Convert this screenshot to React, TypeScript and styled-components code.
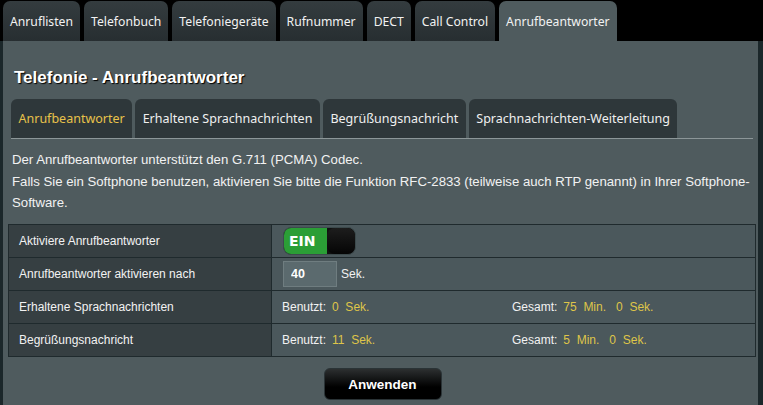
import styled, { createGlobalStyle } from "styled-components";

const GlobalStyle = createGlobalStyle`
  html, body {
    margin: 0;
    padding: 0;
    background: #000;
    width: 763px;
    height: 405px;
    overflow: hidden;
  }
`;

const Page = styled.div`
  width: 763px;
  height: 405px;
  display: flex;
  flex-direction: column;
  background: #000;
  font-family: "Liberation Sans", Arial, sans-serif;
`;

const TopTabs = styled.div`
  display: flex;
  gap: 4px;
  padding: 1px 0 0 3px;
  height: 40px;
`;

const TopTab = styled.div<{ $active?: boolean }>`
  display: flex;
  align-items: center;
  padding: 0 7px;
  border-radius: 7px 7px 0 0;
  font-family: "Noto Sans", sans-serif;
  font-size: 12.2px;
  color: #f2f2f2;
  background: ${(p) =>
    p.$active ? "#4f5b5e" : "linear-gradient(#343c3f, #272e31)"};
`;

const Body = styled.div`
  flex: 1;
  display: flex;
  background: #1b272a;
  padding-left: 3px;
`;

const Panel = styled.div`
  flex: 1;
  margin-right: 5px;
  background: #4f5b5e;
  padding-top: 26px;
  display: flex;
  flex-direction: column;
`;

const Title = styled.h2`
  margin: 0 0 0 11px;
  font-size: 17px;
  font-weight: bold;
  color: #fff;
  text-shadow: 1px 1px 1px #000;
  height: 22px;
  line-height: 22px;
`;

const SubTabs = styled.div`
  display: flex;
  gap: 3px;
  margin: 10px 5px 0 8px;
  border-bottom: 1px solid #8c9698;
  height: 39px;
`;

const SubTab = styled.div<{ $active?: boolean }>`
  display: flex;
  align-items: center;
  padding: 0 7.5px;
  border-radius: 6px 6px 0 0;
  background: #2e373a;
  font-family: "Noto Sans", sans-serif;
  font-size: 12.5px;
  color: ${(p) => (p.$active ? "#e8c24a" : "#f0f0f0")};
`;

const Intro = styled.div`
  padding: 10px 4px 0 9px;
  font-size: 13.2px;
  line-height: 21.5px;
  color: #f2f2f2;
  height: 75px;
`;

const Table = styled.div`
  margin: 0 2px 0 5px;
  display: grid;
  grid-template-columns: 263px 1fr;
  border: 1px solid #1f2a2d;
`;

const LabelCell = styled.div`
  background: #363f42;
  border-right: 1px solid #1f2a2d;
  border-bottom: 1px solid #1f2a2d;
  height: 32px;
  display: flex;
  align-items: center;
  padding-left: 10px;
  font-size: 12px;
  color: #f2f2f2;
  &:nth-last-child(2) {
    border-bottom: none;
  }
`;

const ValueCell = styled.div`
  background: #4b585c;
  border-bottom: 1px solid #1f2a2d;
  height: 32px;
  display: flex;
  align-items: center;
  padding-left: 10px;
  font-size: 12px;
  color: #f2f2f2;
  &:last-child {
    border-bottom: none;
  }
`;

const Toggle = styled.div`
  width: 73px;
  height: 28px;
  border-radius: 8px;
  background: #111;
  border: 1px solid #3c4a4c;
  display: flex;
  overflow: hidden;
  box-sizing: border-box;
  margin-left: 1px;
`;

const ToggleOn = styled.div`
  width: 38px;
  background: #2b9e36;
  color: #fff;
  font-family: "DejaVu Sans", sans-serif;
  font-weight: bold;
  font-size: 14px;
  display: flex;
  align-items: center;
  padding-left: 5px;
`;

const ToggleKnob = styled.div`
  flex: 1;
  background: linear-gradient(#1d1d1d, #050505);
  border-radius: 8px;
`;

const NumberInput = styled.input`
  width: 54px;
  height: 26px;
  box-sizing: border-box;
  background: #5b6a6e;
  border: 1px solid #6f7d80;
  color: #fff;
  font-family: "Liberation Sans", Arial, sans-serif;
  font-weight: bold;
  font-size: 12.5px;
  padding: 0 0 0 7px;
  margin: 0 4px 0 1px;
  outline: none;
`;

const Stat = styled.div`
  display: flex;
  gap: 4px;
  width: 230px;
`;

const Yellow = styled.span`
  color: #dfc549;
  margin-left: 2px;
`;

const Footer = styled.div`
  display: flex;
  justify-content: center;
  padding-top: 11px;
`;

const ApplyButton = styled.button`
  width: 118px;
  height: 32px;
  margin-left: 4px;
  border-radius: 6px;
  border: 1px solid #2a3336;
  background: linear-gradient(#2c2f30, #000 60%);
  color: #fff;
  font-family: "Liberation Sans", Arial, sans-serif;
  font-weight: bold;
  font-size: 13.5px;
`;

const topTabs = [
  "Anruflisten",
  "Telefonbuch",
  "Telefoniegeräte",
  "Rufnummer",
  "DECT",
  "Call Control",
  "Anrufbeantworter",
];

const subTabs = [
  "Anrufbeantworter",
  "Erhaltene Sprachnachrichten",
  "Begrüßungsnachricht",
  "Sprachnachrichten-Weiterleitung",
];

function App() {
  return (
    <>
      <GlobalStyle />
      <Page>
        <TopTabs>
          {topTabs.map((t, i) => (
            <TopTab key={t} $active={i === topTabs.length - 1}>
              {t}
            </TopTab>
          ))}
        </TopTabs>
        <Body>
          <Panel>
            <Title>Telefonie - Anrufbeantworter</Title>
            <SubTabs>
              {subTabs.map((t, i) => (
                <SubTab key={t} $active={i === 0}>
                  {t}
                </SubTab>
              ))}
            </SubTabs>
            <Intro>
              Der Anrufbeantworter unterstützt den G.711 (PCMA) Codec.
              <br />
              Falls Sie ein Softphone benutzen, aktivieren Sie bitte die
              Funktion RFC-2833 (teilweise auch RTP genannt) in Ihrer
              Softphone-Software.
            </Intro>
            <Table>
              <LabelCell>Aktiviere Anrufbeantworter</LabelCell>
              <ValueCell>
                <Toggle>
                  <ToggleOn>EIN</ToggleOn>
                  <ToggleKnob />
                </Toggle>
              </ValueCell>
              <LabelCell>Anrufbeantworter aktivieren nach</LabelCell>
              <ValueCell>
                <NumberInput defaultValue="40" />
                Sek.
              </ValueCell>
              <LabelCell>Erhaltene Sprachnachrichten</LabelCell>
              <ValueCell>
                <Stat>
                  Benutzt:<Yellow>0&nbsp; Sek.</Yellow>
                </Stat>
                <Stat>
                  Gesamt:<Yellow>75&nbsp; Min.&nbsp;&nbsp; 0&nbsp; Sek.</Yellow>
                </Stat>
              </ValueCell>
              <LabelCell>Begrüßungsnachricht</LabelCell>
              <ValueCell>
                <Stat>
                  Benutzt:<Yellow>11&nbsp; Sek.</Yellow>
                </Stat>
                <Stat>
                  Gesamt:<Yellow>5&nbsp; Min.&nbsp;&nbsp; 0&nbsp; Sek.</Yellow>
                </Stat>
              </ValueCell>
            </Table>
            <Footer>
              <ApplyButton>Anwenden</ApplyButton>
            </Footer>
          </Panel>
        </Body>
      </Page>
    </>
  );
}

export default App;
